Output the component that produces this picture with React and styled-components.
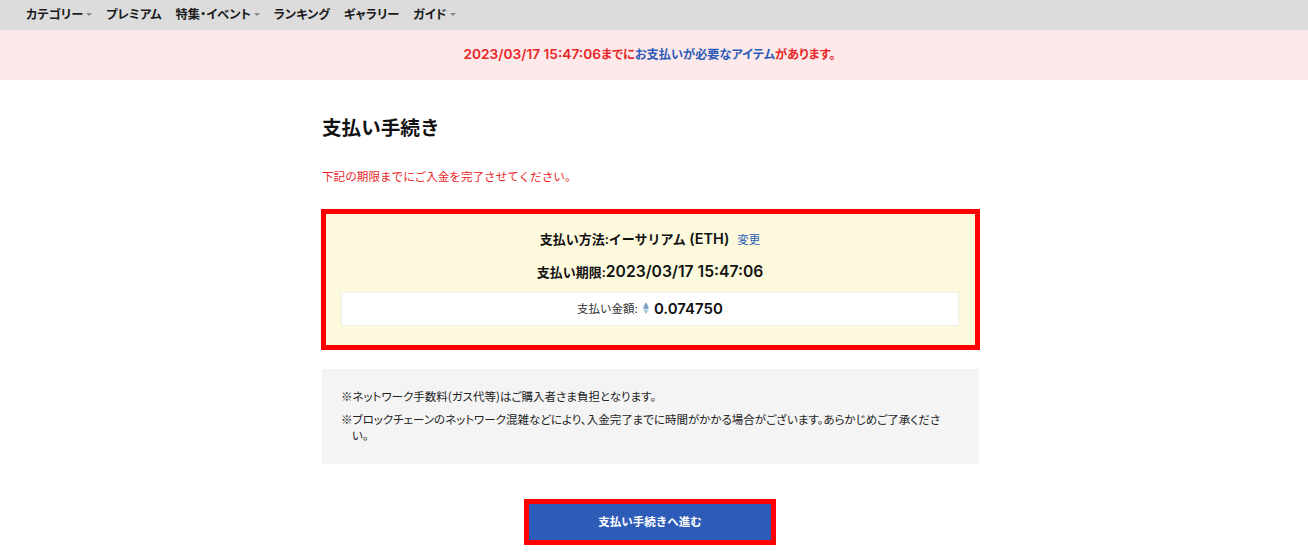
import React from 'react';
import styled, { createGlobalStyle } from 'styled-components';

const Global = createGlobalStyle`
  html, body {
    margin: 0;
    padding: 0;
    background: #fff;
    font-family: Inter, "Noto Sans CJK JP", sans-serif;
    color: #111;
  }
`;

const Nav = styled.nav`
  height: 30px;
  box-sizing: border-box;
  background: #dcdcdc;
  display: flex;
  align-items: center;
  gap: 14px;
  padding: 0 0 2px 26px;
`;

const NavItem = styled.span`
  font-size: 12.25px;
  font-weight: 700;
  font-feature-settings: "palt";
  color: #1a1a1a;
  display: flex;
  align-items: center;
  gap: 3px;
`;

const Caret = styled.i`
  width: 0;
  height: 0;
  border-left: 3px solid transparent;
  border-right: 3px solid transparent;
  border-top: 3px solid #888;
`;

const Banner = styled.div`
  height: 50px;
  padding: 0 9px 2px 0;
  box-sizing: border-box;
  background: #fde9e9;
  display: flex;
  align-items: center;
  justify-content: center;
  font-size: 12.2px;
  font-weight: 600;
  font-feature-settings: "palt";
  color: #e8262a;
`;

const BannerLink = styled.span`
  color: #2d5bb8;
`;

const Main = styled.main`
  width: 659px;
  margin-left: 321px;
`;

const Title = styled.h1`
  margin: 36px 0 0;
  padding-left: 1px;
  font-size: 19.6px;
  line-height: 24px;
  font-weight: 700;
  color: #111;
`;

const Notice = styled.p`
  margin: 29px 0 0;
  padding-left: 1px;
  font-size: 11.6px;
  line-height: 16px;
  color: #e8262a;
`;

const PayBox = styled.section`
  margin-top: 24px;
  box-sizing: border-box;
  height: 141px;
  border: 5px solid #ff0000;
  background: #fdf9dd;
  padding: 15px 16px 0 15px;
  display: flex;
  flex-direction: column;
  align-items: center;
`;

const PayLine = styled.div`
  font-size: 13px;
  line-height: 20px;
  font-weight: 600;
  color: #111;
  margin-bottom: ${(p) => p.$gap}px;
  display: flex;
  align-items: baseline;
`;

const Latin = styled.span`
  font-size: ${(p) => p.$size}px;
`;

const ChangeLink = styled.a`
  font-size: 11.5px;
  font-weight: 400;
  color: #2d5bb8;
  margin-left: 8px;
`;

const AmountBox = styled.div`
  align-self: stretch;
  height: 34px;
  box-sizing: border-box;
  background: #fff;
  border: 1px solid #eeeeee;
  padding-bottom: 2px;
  display: flex;
  align-items: center;
  justify-content: center;
  font-size: 11.5px;
  color: #333;
`;

const EthIcon = styled.svg`
  width: 6px;
  height: 12px;
  margin: 0 5px;
`;

const AmountValue = styled.span`
  font-size: 15px;
  font-weight: 600;
  color: #111;
`;

const NoteBox = styled.section`
  margin: 19px 1px 0;
  box-sizing: border-box;
  height: 95px;
  background: #f4f4f4;
  padding: 19px 34px 0 19px;
`;

const Note = styled.p`
  margin: 0 0 7px;
  font-family: "Noto Sans CJK JP", sans-serif;
  font-size: 11.5px;
  line-height: 16px;
  font-feature-settings: "palt";
  color: #222;
  padding-left: 11px;
  text-indent: -11px;
`;

const ButtonRow = styled.div`
  margin-top: 35px;
  padding-left: 203px;
`;

const PayButton = styled.button`
  width: 252px;
  height: 46px;
  box-sizing: border-box;
  border: 5px solid #ff0000;
  background: #2d5bb8;
  color: #fff;
  padding: 0 0 2px;
  font-family: inherit;
  font-size: 11.5px;
  font-weight: 700;
`;

const navItems = [
  ['カテゴリー', true],
  ['プレミアム', false],
  ['特集・イベント', true],
  ['ランキング', false],
  ['ギャラリー', false],
  ['ガイド', true],
];

export default function App() {
  return (
    <>
      <Global />
      <Nav>
        {navItems.map(([label, hasMenu]) => (
          <NavItem key={label}>
            {label}
            {hasMenu && <Caret />}
          </NavItem>
        ))}
      </Nav>
      <Banner>
        <span>
          <Latin $size={13.7}>2023/03/17 15:47:06</Latin>までに<BannerLink>お支払いが必要なアイテム</BannerLink>があります。
        </span>
      </Banner>
      <Main>
        <Title>支払い手続き</Title>
        <Notice>下記の期限までにご入金を完了させてください。</Notice>
        <PayBox>
          <PayLine $gap={12}>
            <span>支払い方法:イーサリアム<Latin $size={14.5}> (ETH) </Latin></span><ChangeLink>変更</ChangeLink>
          </PayLine>
          <PayLine $gap={10}>
            <span>支払い期限:<Latin $size={15.7}>2023/03/17 15:47:06</Latin></span>
          </PayLine>
          <AmountBox>
            支払い金額:
            <EthIcon viewBox="0 0 6 12">
              <path d="M3 0 L6 6 L3 7.8 L0 6 Z" fill="#7da3c0" />
              <path d="M0 6.9 L3 8.7 L6 6.9 L3 12 Z" fill="#9dbcd2" />
            </EthIcon>
            <AmountValue>0.074750</AmountValue>
          </AmountBox>
        </PayBox>
        <NoteBox>
          <Note>※ネットワーク手数料(ガス代等)はご購入者さま負担となります。</Note>
          <Note>※ブロックチェーンのネットワーク混雑などにより、入金完了までに時間がかかる場合がございます。あらかじめご了承ください。</Note>
        </NoteBox>
        <ButtonRow>
          <PayButton>支払い手続きへ進む</PayButton>
        </ButtonRow>
      </Main>
    </>
  );
}
